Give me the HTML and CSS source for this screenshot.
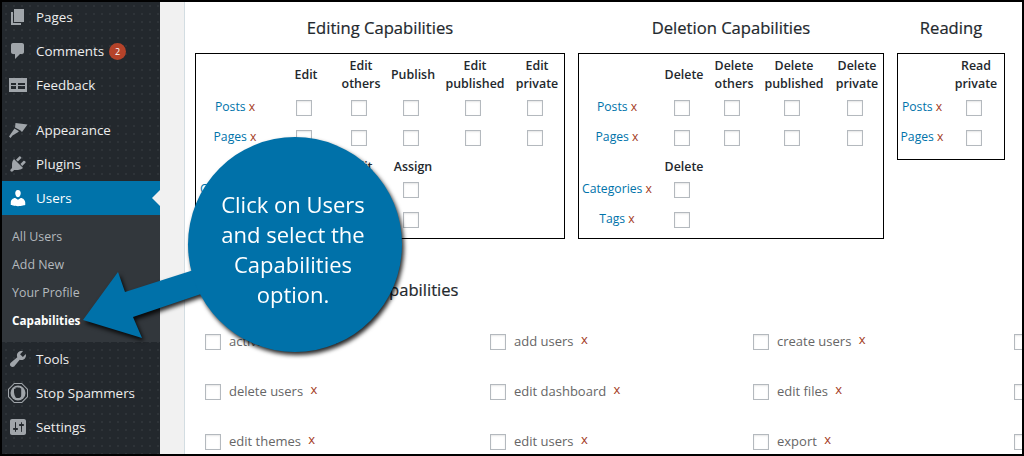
FILE: index.html
```html
<!DOCTYPE html>
<html lang="en">
<head>
  <meta charset="UTF-8">
  <meta name="viewport" content="width=device-width, initial-scale=1.0">
  <title>Capabilities</title>
  <link rel="stylesheet" href="styles.css">
</head>
<body>
<div class="screen">

  <!-- Admin menu -->
  <nav class="sidebar">
    <ul class="menu">
      <li class="menu-item">
        <svg class="menu-icon" viewBox="0 0 20 20"><path d="M6 15V2h10v13H6zm-1 1h8v2H3V5h2v11z"/></svg>
        <span>Pages</span>
      </li>
      <li class="menu-item">
        <svg class="menu-icon" viewBox="0 0 20 20"><path d="M5 2h9c1.100 0 2 .9 2 2v7c0 1.100-.9 2-2 2h-2l-5 5v-5H5c-1.100 0-2-.9-2-2V4c0-1.100.9-2 2-2z"/></svg>
        <span>Comments</span><span class="badge">2</span>
      </li>
      <li class="menu-item">
        <svg class="menu-icon" viewBox="0 0 20 20"><path fill-rule="evenodd" d="M1 3h18v14H1zM3 8v2h5V8zm0 3v3h5v-3zm7-3v2h7V8zm0 3v3h7v-3z"/></svg>
        <span>Feedback</span>
      </li>
      <li class="menu-item menu-gap">
        <svg class="menu-icon" viewBox="0 0 20 20"><path d="M7.500 3L19.500 4.500L14 12L12.500 10.500L7 7.500Z"/><path d="M6.500 8.500L11 11.200L9.500 12.500L4.500 15.500L2.500 18L1 16.500L3 13.500Z"/></svg>
        <span>Appearance</span>
      </li>
      <li class="menu-item">
        <svg class="menu-icon" viewBox="0 0 20 20"><path d="M13.110 4.360L9.870 7.600 8 5.730l3.240-3.240c.35-.34 1.050-.2 1.560.32.52.51.66 1.210.31 1.550zm-8 1.770l.91-1.120 9.010 9.010-1.190.84c-.71.71-2.630 1.160-3.820 1.160H6.140L4.900 17.260c-.59.59-1.540.59-2.120 0-.59-.58-.59-1.530 0-2.120l1.240-1.240v-3.880c0-1.130.4-3.190 1.090-3.890zm7.260 3.970l3.240-3.240c.34-.35 1.040-.21 1.550.31.52.51.66 1.210.31 1.550l-3.240 3.250z"/></svg>
        <span>Plugins</span>
      </li>
      <li class="menu-item menu-current">
        <svg class="menu-icon" viewBox="0 0 20 20"><path d="M10 9.250c-2.270 0-2.730-3.440-2.730-3.440C7 4.020 7.820 2 9.970 2c2.160 0 2.980 2.020 2.710 3.810 0 0-.41 3.440-2.680 3.440zm0 2.570L12.720 10c2.390 0 4.520 2.330 4.520 4.530v2.490s-3.650 1.130-7.240 1.130c-3.650 0-7.240-1.130-7.240-1.130v-2.490c0-2.250 1.940-4.480 4.470-4.480z"/></svg>
        <span>Users</span>
      </li>
      <li>
        <ul class="submenu">
          <li>All Users</li>
          <li>Add New</li>
          <li>Your Profile</li>
          <li class="submenu-current">Capabilities</li>
        </ul>
      </li>
      <li class="menu-item">
        <svg class="menu-icon" viewBox="0 0 20 20"><path d="M16.680 9.770c-1.340 1.340-3.300 1.670-4.950.99l-5.410 6.520c-.99.99-2.590.99-3.580 0s-.99-2.590 0-3.570l6.520-5.420c-.68-1.650-.35-3.610.99-4.950 1.280-1.280 3.120-1.620 4.720-1.060l-2.890 2.890 2.820 2.820 2.860-2.870c.53 1.580.18 3.390-1.080 4.650z"/></svg>
        <span>Tools</span>
      </li>
      <li class="menu-item">
        <svg class="menu-icon" viewBox="0 0 20 20"><path fill-rule="evenodd" d="M6 0h8l6 6v8l-6 6H6l-6-6V6zM6.400 1L1 6.400v7.200L6.400 19h7.200l5.400-5.400V6.400L13.600 1z"/><circle cx="10" cy="10" r="7.500"/><path class="hand" d="M6 9.500V6.500a.8.8 0 0 1 1.400-.5V4.800a.8.8 0 0 1 1.500 0a.8.8 0 0 1 1.500 0a.8.8 0 0 1 1.500.5a.8.8 0 0 1 1.300.7V12a3 3 0 0 1-1 2.500c-1 .8-3.500.8-4.500 0L6.500 12z"/></svg>
        <span>Stop Spammers</span>
      </li>
      <li class="menu-item">
        <svg class="menu-icon" viewBox="0 0 20 20"><path d="M18 16V4c0-1.100-.9-2-2-2H4c-1.100 0-2 .9-2 2v12c0 1.100.9 2 2 2h12c1.100 0 2-.9 2-2zM8 11h1c.55 0 1 .45 1 1s-.45 1-1 1H8v1.500c0 .28-.22.5-.5.5s-.5-.22-.5-.5V13H6c-.55 0-1-.45-1-1s.45-1 1-1h1V5.500c0-.28.22-.5.5-.5s.5.22.5.5V11zm5-2h-1c-.55 0-1-.45-1-1s.45-1 1-1h1V5.500c0-.28.22-.5.5-.5s.5.22.5.5V7h1c.55 0 1 .45 1 1s-.45 1-1 1h-1v5.500c0 .28-.22.5-.5.5s-.5-.22-.5-.5V9z"/></svg>
        <span>Settings</span>
      </li>
    </ul>
  </nav>

  <main class="content">
    <div class="panel">

      <div class="sections">
        <section>
          <h2>Editing Capabilities</h2>
          <div class="cap-box">
            <table class="caps">
              <colgroup><col class="w80"><col class="w60"><col class="w50"><col class="w54"><col class="w70"><col class="w54"></colgroup>
              <tr class="head-row"><th></th><th>Edit</th><th>Edit others</th><th>Publish</th><th>Edit published</th><th>Edit private</th></tr>
              <tr><td class="type"><a>Posts</a> <i>x</i></td><td><input type="checkbox"></td><td><input type="checkbox"></td><td><input type="checkbox"></td><td><input type="checkbox"></td><td><input type="checkbox"></td></tr>
              <tr><td class="type"><a>Pages</a> <i>x</i></td><td><input type="checkbox"></td><td><input type="checkbox"></td><td><input type="checkbox"></td><td><input type="checkbox"></td><td><input type="checkbox"></td></tr>
              <tr class="sub-head"><th></th><th>Manage</th><th>Edit</th><th>Assign</th><th></th><th></th></tr>
              <tr><td class="type"><a>Categories</a> <i>x</i></td><td><input type="checkbox"></td><td><input type="checkbox"></td><td><input type="checkbox"></td><td></td><td></td></tr>
              <tr><td class="type"><a>Tags</a> <i>x</i></td><td><input type="checkbox"></td><td><input type="checkbox"></td><td><input type="checkbox"></td><td></td><td></td></tr>
            </table>
          </div>
        </section>

        <section>
          <h2>Deletion Capabilities</h2>
          <div class="cap-box">
            <table class="caps">
              <colgroup><col class="w78"><col class="w54"><col class="w46"><col class="w74"><col class="w52"></colgroup>
              <tr class="head-row"><th></th><th>Delete</th><th>Delete others</th><th>Delete published</th><th>Delete private</th></tr>
              <tr><td class="type"><a>Posts</a> <i>x</i></td><td><input type="checkbox"></td><td><input type="checkbox"></td><td><input type="checkbox"></td><td><input type="checkbox"></td></tr>
              <tr><td class="type"><a>Pages</a> <i>x</i></td><td><input type="checkbox"></td><td><input type="checkbox"></td><td><input type="checkbox"></td><td><input type="checkbox"></td></tr>
              <tr class="sub-head"><th></th><th>Delete</th><th></th><th></th><th></th></tr>
              <tr><td class="type"><a>Categories</a> <i>x</i></td><td><input type="checkbox"></td><td></td><td></td><td></td></tr>
              <tr><td class="type"><a>Tags</a> <i>x</i></td><td><input type="checkbox"></td><td></td><td></td><td></td></tr>
            </table>
          </div>
        </section>

        <section>
          <h2>Reading</h2>
          <div class="cap-box cap-box-short">
            <table class="caps">
              <colgroup><col class="w50"><col class="w56"></colgroup>
              <tr class="head-row"><th></th><th>Read private</th></tr>
              <tr><td class="type"><a>Posts</a> <i>x</i></td><td><input type="checkbox"></td></tr>
              <tr><td class="type"><a>Pages</a> <i>x</i></td><td><input type="checkbox"></td></tr>
            </table>
          </div>
        </section>
      </div>

      <h2 class="list-title">User Capabilities</h2>
      <div class="cap-list">
        <label><input type="checkbox">activate plugins <i>x</i></label>
        <label><input type="checkbox">add users <i>x</i></label>
        <label><input type="checkbox">create users <i>x</i></label>
        <label><input type="checkbox"></label>
        <label><input type="checkbox">delete users <i>x</i></label>
        <label><input type="checkbox">edit dashboard <i>x</i></label>
        <label><input type="checkbox">edit files <i>x</i></label>
        <label><input type="checkbox"></label>
        <label><input type="checkbox">edit themes <i>x</i></label>
        <label><input type="checkbox">edit users <i>x</i></label>
        <label><input type="checkbox">export <i>x</i></label>
        <label><input type="checkbox"></label>
      </div>
    </div>
  </main>

  <!-- Callout over the page -->
  <div class="callout">
    <svg class="callout-arrow" viewBox="80 137 322 215"><path d="M83 320L118 272L125 292L200 268L210 291L133 317L142 338Z"/></svg>
    <div class="callout-circle">Click on Users and select the Capabilities option.</div>
  </div>

</div>
</body>
</html>
```

FILE: styles.css
```css
* {
  margin: 0;
  padding: 0;
  box-sizing: border-box;
}
body {
  font-family: "Open Sans", "Noto Sans", sans-serif;
  background: #000;
  height: 456px;
  overflow: hidden;
}
ul {
  list-style: none;
}
.screen {
  position: relative;
  display: flex;
  height: 456px;
  border: 2px solid #000;
  overflow: hidden;
}

/* sidebar */
.sidebar {
  width: 158px;
  flex-shrink: 0;
  background-color: #23282d;
  background-image: radial-gradient(rgba(255, 255, 255, 0.07) 0.6px, transparent 1px);
  background-size: 8px 8px;
}
.menu {
  margin-top: -2px;
}
.menu-item {
  position: relative;
  display: flex;
  align-items: center;
  height: 34px;
  padding-left: 6px;
  font-size: 13.4px;
  color: #eee;
  white-space: nowrap;
}
.menu-gap {
  margin-top: 11px;
}
.menu-icon {
  width: 20px;
  height: 20px;
  margin-right: 8px;
  fill: #a0a5aa;
  flex-shrink: 0;
}
.menu-icon .hand {
  fill: #23282d;
}
.badge {
  display: inline-flex;
  justify-content: center;
  align-items: center;
  width: 17px;
  height: 17px;
  margin-left: 5px;
  border-radius: 50%;
  background: #b5432a;
  color: #fff;
  font-size: 9px;
}
.menu-current {
  background: #0073aa;
  color: #fff;
}
.menu-current .menu-icon {
  fill: #fff;
}
.menu-current::after {
  content: "";
  position: absolute;
  right: 0;
  top: 9px;
  border: 8px solid transparent;
  border-left: 0;
  border-right-color: #f1f1f1;
}
.submenu {
  background: #32373c;
  padding: 8px 0 7px 10px;
  font-size: 12.4px;
  color: #b4b9be;
}
.submenu li {
  height: 28px;
  line-height: 28px;
}
.submenu li.submenu-current {
  color: #fff;
  font-weight: 700;
  font-size: 11.7px;
  line-height: 26px;
}

/* main area */
.content {
  flex: 1;
  min-width: 0;
  background: #f1f1f1;
  padding-left: 24px;
}
.panel {
  height: 100%;
  padding: 0 0 0 10px;
  background: #fff;
  border-left: 1px solid #d3dde2;
  overflow: hidden;
}
.sections {
  display: flex;
  align-items: flex-start;
  gap: 13px;
  padding-top: 15px;
}
h2 {
  font-size: 16.6px;
  font-weight: 400;
  line-height: 22px;
  color: #23282d;
  text-align: center;
  -webkit-text-stroke: 0.2px #23282d;
  white-space: nowrap;
}
.sections section {
  flex-shrink: 0;
}
.cap-box {
  margin-top: 14px;
  padding-bottom: 3px;
  border: 1px solid #000;
}
.cap-box-short {
  padding-bottom: 6px;
}
.caps {
  border-collapse: collapse;
  table-layout: fixed;
  font-size: 12.4px;
}
.w46 { width: 46px; }
.w50 { width: 50px; }
.w52 { width: 52px; }
.w54 { width: 54px; }
.w56 { width: 56px; }
.w60 { width: 60px; }
.w70 { width: 70px; }
.w74 { width: 74px; }
.w78 { width: 78px; }
.w80 { width: 80px; }
.caps th {
  font-weight: 600;
  line-height: 18px;
  color: #23282d;
  text-align: center;
}
.caps td {
  height: 30px;
  text-align: center;
}
.head-row th {
  height: 39px;
  padding-top: 3px;
}
.sub-head th {
  height: 22px;
  padding-top: 5px;
  line-height: 17px;
}
.caps .type {
  padding: 0 2px 4px 0;
  font-size: 12.2px;
  white-space: nowrap;
}
.type a {
  color: #0073aa;
}
i {
  font-style: normal;
  color: #a33a22;
}
input[type="checkbox"] {
  appearance: none;
  display: inline-block;
  width: 16px;
  height: 16px;
  margin-right: 4px;
  vertical-align: middle;
  background: #fff;
  border: 1px solid #b4b9be;
  box-shadow: inset 0 1px 2px rgba(0, 0, 0, 0.1);
}
.caps input {
  position: relative;
  top: -1px;
}

/* capability list */
.list-title {
  margin: 40px 0 0 134px;
  text-align: left;
}
.cap-list {
  display: grid;
  grid-template-columns: 285px 263px 261px 285px;
  grid-auto-rows: 50px;
  width: 1094px;
  margin-top: 15px;
  padding-left: 10px;
  align-items: center;
  font-size: 13px;
  color: #666;
  white-space: nowrap;
}
.cap-list input {
  margin-right: 8px;
}
.cap-list i {
  position: relative;
  top: -2px;
  margin-left: 4px;
}

/* callout */
.callout {
  position: absolute;
  left: 78px;
  top: 135px;
  width: 322px;
  height: 215px;
  filter: drop-shadow(2px 3px 2px rgba(0, 0, 0, 0.85));
}
.callout-arrow {
  position: absolute;
  left: 0;
  top: 0;
  width: 322px;
  height: 215px;
  fill: #0071a9;
}
.callout-circle {
  position: absolute;
  right: 0;
  top: 0;
  display: flex;
  align-items: center;
  width: 214px;
  height: 215px;
  padding: 9px 32px 0 28px;
  border-radius: 50%;
  background: #0071a9;
  color: #fff;
  font-size: 22px;
  line-height: 30px;
  text-align: center;
}
```
